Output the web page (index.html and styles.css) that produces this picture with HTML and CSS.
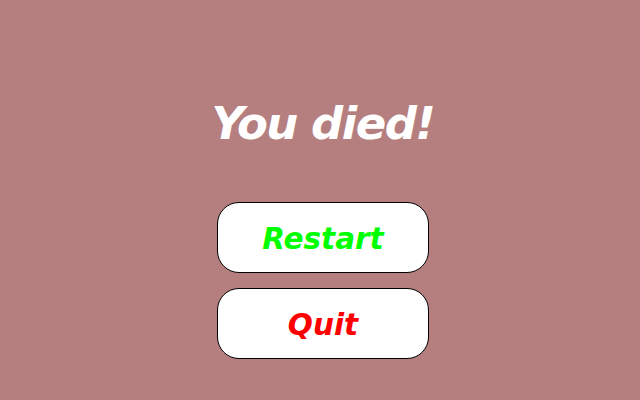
FILE: index.html
```html
<!DOCTYPE html>
<html>
<head>
<meta charset="utf-8">
<link rel="stylesheet" href="styles.css">
</head>
<body>
<main class="screen">
  <h1 class="title">You died!</h1>
  <div class="menu">
    <button class="btn btn-restart">Restart</button>
    <button class="btn btn-quit">Quit</button>
  </div>
</main>
</body>
</html>
```
FILE: styles.css
```css
html, body {
  margin: 0;
  padding: 0;
}
body {
  width: 640px;
  height: 400px;
  background: #b57f7f;
  overflow: hidden;
  font-family: "DejaVu Sans", sans-serif;
}
.screen {
  display: flex;
  flex-direction: column;
  align-items: center;
  padding-top: 96px;
  padding-left: 6px;
}
.title {
  margin: 0;
  font-size: 45px;
  line-height: 56px;
  font-weight: bold;
  font-style: italic;
  color: #ffffff;
  letter-spacing: -1.5px;
}
.menu {
  display: flex;
  flex-direction: column;
  gap: 15px;
  margin-top: 50px;
}
.btn {
  width: 212px;
  height: 71px;
  background: #ffffff;
  border: 1px solid #000000;
  border-radius: 22px;
  font-family: "DejaVu Sans", sans-serif;
  font-size: 29.5px;
  font-weight: bold;
  font-style: italic;
  padding: 3px 0 0 0;
  margin: 0;
}
.btn-restart { color: #00ff00; }
.btn-quit { color: #ff0000; }
```
